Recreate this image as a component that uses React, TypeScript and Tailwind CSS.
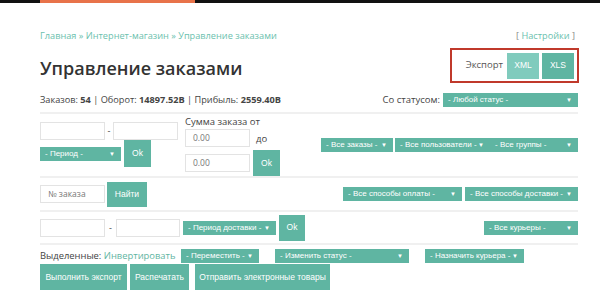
const TEAL = 'bg-[#5fb5a2]';

const Select = ({ label, w, className = '' }: { label: string; w: string; className?: string }) => (
  <div
    className={`${TEAL} ${w} ${className} flex h-[14px] shrink-0 items-center justify-between overflow-hidden whitespace-nowrap pl-[5px] pr-[6px] font-['Liberation_Sans',Arial,sans-serif] text-[8px] leading-none text-white`}
  >
    <span>{label}</span>
    <span className="text-[6px]">▼</span>
  </div>
);

const Button = ({ label, className = '' }: { label: string; className?: string }) => (
  <div
    className={`${TEAL} ${className} flex shrink-0 items-center justify-center whitespace-nowrap font-['Liberation_Sans',Arial,sans-serif] text-[8.5px] text-white`}
  >
    {label}
  </div>
);

const Input = ({ w, placeholder = '', className = '' }: { w: string; placeholder?: string; className?: string }) => (
  <div
    className={`${w} ${className} flex h-[18px] shrink-0 items-center border border-[#e3e3e3] bg-white pl-[7px] text-[8.5px] text-[#777]`}
  >
    {placeholder}
  </div>
);

const Rule = () => <div className="h-[2px] bg-[#f0f0f0]" />;

export default function App() {
  return (
    <div className="h-[290px] w-[600px] overflow-hidden bg-white font-['Open_Sans',sans-serif] text-[#444]">
      <div className="flex h-[3px] bg-[#111]">
        <div className="ml-[40px] w-[155px] bg-[#e8734a]" />
      </div>

      <div className="px-[40px] pr-[22px]">
        <div className="mt-[25px] flex h-[15px] items-center justify-between whitespace-nowrap text-[9.2px] text-[#6bbfae]">
          <span>Главная » Интернет-магазин » Управление заказами</span>
          <span className="pr-[3px] text-[#6bbfae]">
            <span className="text-[#888]">[ </span>Настройки<span className="text-[#888]"> ]</span>
          </span>
        </div>

        <div className="mt-[5px] flex h-[35px] items-center justify-between">
          <h1 className="pt-[5px] text-[18px] font-semibold text-[#333]">Управление заказами</h1>
          <div className="mr-[-1px] flex h-[35px] w-[129px] items-center justify-end gap-[3px] border-2 border-[#c0392b] pr-[3px]">
            <span className="mr-[1px] text-[9.5px] text-[#555]">Экспорт</span>
            <Button label="XML" className="h-[26px] w-[32px] bg-[#80cbbd]" />
            <Button label="XLS" className="h-[26px] w-[32px]" />
          </div>
        </div>

        <div className="mt-[10px] flex h-[14px] items-center justify-between whitespace-nowrap text-[9.2px]">
          <span>
            Заказов: <b>54</b> | Оборот: <b>14897.52В</b> | Прибыль: <b>2559.40В</b>
          </span>
          <div className="flex items-center gap-[3px]">
            <span className="text-[9.5px]">Со статусом:</span>
            <Select label="- Любой статус -" w="w-[135px]" />
          </div>
        </div>

        <div className="mt-[5px]">
          <Rule />
        </div>

        <div className="flex h-[62px] items-start">
          <div className="mt-[8px] flex flex-col">
            <div className="flex items-center">
              <Input w="w-[65px]" className="h-[17px]" />
              <span className="w-[8px] text-center text-[9px]">-</span>
              <Input w="w-[65px]" className="h-[17px]" />
            </div>
            <div className="flex h-[27px] items-center gap-[3px]">
              <Select label="- Период -" w="w-[81px]" className="h-[13px]" />
              <Button label="Ok" className="h-[27px] w-[27px]" />
            </div>
          </div>

          <div className="ml-[7px] mt-[1px] flex flex-col">
            <span className="h-[14px] whitespace-nowrap text-[9.5px] leading-[14px]">Сумма заказа от</span>
            <div className="flex items-center">
              <Input w="w-[65px]" placeholder="0.00" />
              <span className="ml-[6px] mt-[2px] text-[9.5px]">до</span>
            </div>
            <div className="mt-[3px] flex items-center gap-[3px]">
              <Input w="w-[65px]" placeholder="0.00" />
              <Button label="Ok" className="h-[26px] w-[27px]" />
            </div>
          </div>

          <div className="ml-auto flex self-center">
            <Select label="- Все заказы -" w="w-[72px]" className="mr-[2px]" />
            <Select label="- Все пользователи -" w="w-[95px]" />
            <Select label="- Все группы -" w="w-[88px]" />
          </div>
        </div>

        <Rule />

        <div className="flex h-[32px] items-center">
          <Input w="w-[65px]" placeholder="№ заказа" />
          <Button label="Найти" className="ml-[2px] h-[25px] w-[40px]" />
          <div className="ml-auto flex gap-[3px]">
            <Select label="- Все способы оплаты -" w="w-[119px]" />
            <Select label="- Все способы доставки -" w="w-[113px]" />
          </div>
        </div>

        <Rule />

        <div className="flex h-[31px] items-center">
          <Input w="w-[65px]" className="h-[17px]" />
          <span className="w-[11px] text-center text-[9px]">-</span>
          <Input w="w-[64px]" className="h-[17px]" />
          <Select label="- Период доставки -" w="w-[93px]" className="ml-[3px]" />
          <Button label="Ok" className="ml-[3px] h-[26px] w-[26px]" />
          <Select label="- Все курьеры -" w="ml-auto w-[94px]" />
        </div>

        <Rule />

        <div className="mt-[3px] flex h-[16px] items-center">
          <span className="w-[141px] whitespace-nowrap text-[9.4px]">
            Выделенные: <span className="text-[#5fb5a2]">Инвертировать</span>
          </span>
          <Select label="- Переместить -" w="w-[78px]" />
          <Select label="- Изменить статус -" w="w-[134px]" className="ml-[16px]" />
          <Select label="- Назначить курьера -" w="w-[99px]" className="ml-[16px]" />
        </div>

        <div className="flex">
          <Button label="Выполнить экспорт" className="h-[26px] w-[87px]" />
          <Button label="Распечатать" className="ml-[3px] h-[26px] w-[59px]" />
          <Button label="Отправить электронные товары" className="ml-[6px] h-[26px] w-[135px]" />
        </div>
      </div>
    </div>
  );
}
